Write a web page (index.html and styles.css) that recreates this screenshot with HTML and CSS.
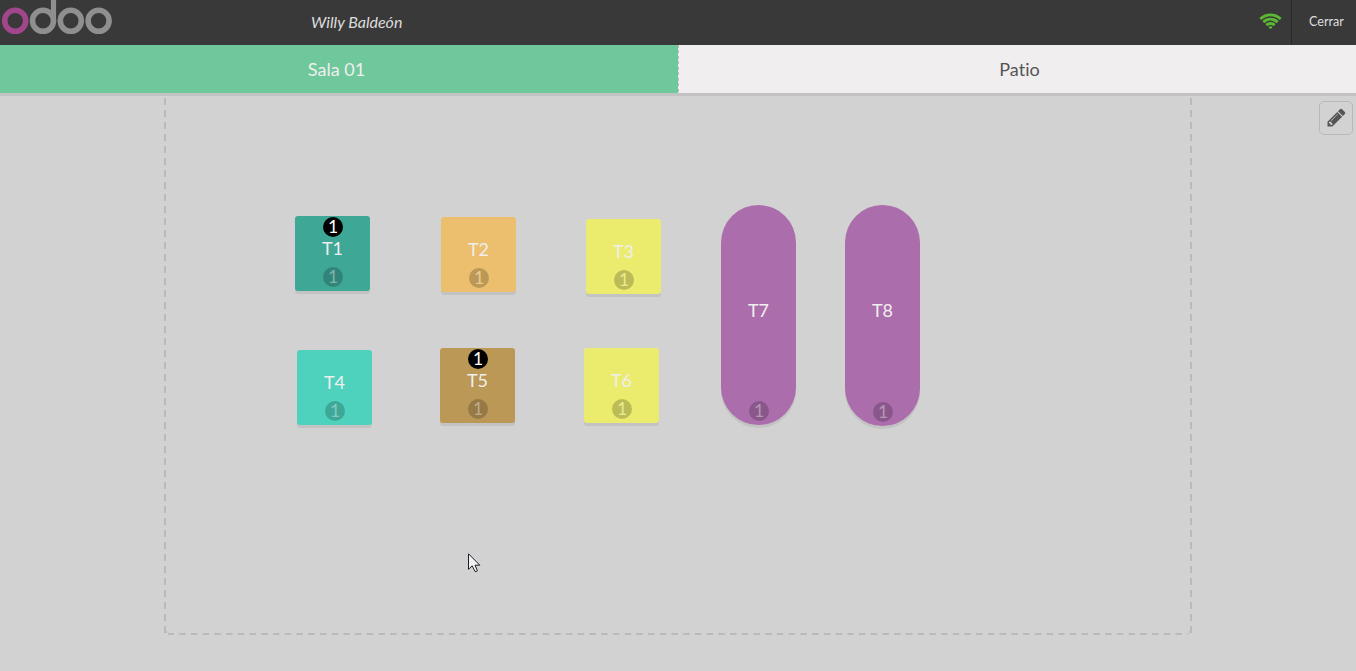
FILE: index.html
```html
<!DOCTYPE html>
<html lang="es">
<head>
<meta charset="utf-8">
<title>Odoo POS</title>
<link rel="stylesheet" href="styles.css">
</head>
<body>
<header class="topbar">
  <svg class="logo" width="116" height="45" viewBox="0 0 116 45" fill="none" stroke="#8f8f8f" stroke-width="5.6">
    <circle cx="15.2" cy="20.8" r="10.5" stroke="#a2468b"/>
    <circle cx="43" cy="20.8" r="10.5"/>
    <path d="M53.5 21V0" stroke-width="5.2"/>
    <circle cx="70.8" cy="20.8" r="10.5"/>
    <circle cx="98.6" cy="20.8" r="10.5"/>
  </svg>
  <span class="username">Willy Baldeón</span>
  <div class="status">
    <svg class="wifi" width="23" height="18" viewBox="0 0 2048 1603" fill="#5cb832"><path d="M1024 1523q-20 0 -93 -73.5t-73 -93.5q0 -32 62.500 -54t103.500 -22t103.500 22t62.500 54q0 20 -73 93.500t-93 73.500zM1294 1253q-2 0 -40 -25t-101.500 -50t-128.500 -25t-128.500 25t-101 50t-40.500 25q-18 0 -93.500 -75t-75.500 -93q0 -13 10 -23q78 -77 196 -121t233 -44t233 44t196 121q10 10 10 23q0 18 -75.500 93t-93.500 75zM1567 980q-11 0 -23 -8q-136 -105 -252 -154.500t-268 -49.500q-85 0 -170.500 22t-149 53t-113.500 62t-79 53t-31 22q-17 0 -92 -75t-75 -93q0 -12 10 -22q132 -132 320 -205t380 -73t380 73t320 205q10 10 10 22q0 18 -75 93t-92 75zM1838 709q-11 0 -22 -9q-179 -157 -371.500 -236.500t-420.500 -79.500t-420.500 79.500t-371.500 236.500q-11 9 -22 9q-17 0 -92.500 -75t-75.500 -93q0 -13 10 -23q187 -186 445 -288t527 -102t527 102t445 288q10 10 10 23q0 18 -75.500 93t-92.500 75z"/></svg>
  </div>
  <div class="close">Cerrar</div>
</header>
<nav class="floors">
  <div class="floor-tab active">Sala 01</div>
  <div class="floor-tab">Patio</div>
</nav>
<main class="floor">
  <div class="map">
    <svg class="outline" width="1028" height="542" viewBox="0 0 1028 542" fill="none" stroke="#bababa" stroke-width="2">
      <path d="M1 5V533" stroke-dasharray="7 5"/>
      <path d="M1027 5V533" stroke-dasharray="7 5"/>
      <path d="M4 541H1024" stroke-dasharray="6.500 5.220" stroke-dashoffset="0.500"/>
      <path d="M1 533V539H3M1027 533V539H1025"/>
    </svg>
    <div class="table t1"><b class="orders">1</b><span class="label">T1</span><i class="seats">1</i></div>
    <div class="table t2"><span class="label">T2</span><i class="seats">1</i></div>
    <div class="table t3"><span class="label">T3</span><i class="seats">1</i></div>
    <div class="table t4"><span class="label">T4</span><i class="seats">1</i></div>
    <div class="table t5"><b class="orders">1</b><span class="label">T5</span><i class="seats">1</i></div>
    <div class="table t6"><span class="label">T6</span><i class="seats">1</i></div>
    <div class="table tall t7"><span class="label">T7</span><i class="seats">1</i></div>
    <div class="table tall t8"><span class="label">T8</span><i class="seats">1</i></div>
  </div>
  <div class="edit">
    <svg width="21" height="21" viewBox="0 0 1792 1792" fill="#555"><path d="M491 1536l91-91-235-235-91 91v107h128v128h107zm523-928q0-22-22-22-10 0-17 7l-542 542q-7 7-7 17 0 22 22 22 10 0 17-7l542-542q7-7 7-17zm-54-192l416 416-832 832h-416v-416zm683 96q0 53-37 90l-166 166-416-416 166-165q36-38 90-38 53 0 91 38l235 234q37 39 37 91z"/></svg>
  </div>
  <svg class="cursor" width="14" height="21" viewBox="0 0 14 21" fill="#f2f2f2" stroke="#1c1c28" stroke-width="1"><path d="M.5 .8V16.300L4.200 12.800L6.900 18.200Q8 19.400 9.400 17.800L7 12.200H11.800Z"/></svg>
</main>
</body>
</html>
```

FILE: styles.css
```css
* { box-sizing: border-box; }
body {
  margin: 0;
  height: 671px;
  display: flex;
  flex-direction: column;
  overflow: hidden;
  background: #d2d2d2;
  font-family: Lato, sans-serif;
  font-variant-ligatures: none;
}
.topbar {
  height: 45px;
  flex: none;
  display: flex;
  align-items: center;
  background: #393939;
  color: #ddd;
}
.logo { flex: none; }
.username {
  margin-left: 195px;
  padding-bottom: 2px;
  font-size: 16px;
  font-style: italic;
}
.status {
  margin-left: auto;
  height: 45px;
  padding: 12px 9px 0 0;
  border-right: 1px solid #292929;
}
.wifi { display: block; }
.close {
  width: 64px;
  padding: 0 0 3px 17px;
  font-size: 12.6px;
}
.floors {
  flex: none;
  display: flex;
  height: 51px;
  border-bottom: 3px solid #c2c2c2;
  background: #f0eeee;
}
.floor-tab {
  flex: 1;
  padding-left: 4px;
  line-height: 49px;
  text-align: center;
  font-size: 18px;
  color: #555;
}
.floor-tab.active {
  flex: 0 0 679px;
  padding: 0 6px 0 0;
  color: #f0eeee;
  background:
    repeating-linear-gradient(#bdbdbd 0 3px, #f0eeee 3px 5.500px) right / 1px 100% no-repeat,
    #6ec89b;
}
.floor {
  position: relative;
  flex: 1;
  padding: 0 164px;
}
.map {
  position: relative;
  width: 1028px;
  height: 542px;
}
.outline {
  position: absolute;
  left: 0;
  top: -3px;
}
.table {
  position: absolute;
  width: 75px;
  height: 75px;
  display: flex;
  align-items: center;
  justify-content: center;
  padding-bottom: 11px;
  border-radius: 3px;
  box-shadow: 0 3px rgba(0, 0, 0, 0.07);
  font-size: 18px;
  color: #f0eeee;
}
.table.tall { height: 220px; padding-bottom: 10px; border-radius: 38px; }
.label { line-height: 20px; }
.orders, .seats {
  position: absolute;
  left: 28px;
  width: 20px;
  height: 20px;
  border-radius: 50%;
  line-height: 20px;
  text-align: center;
  font-size: 17.5px;
  font-weight: 400;
  font-style: normal;
}
.orders { top: 1px; background: #000; color: #fff; }
.seats {
  bottom: 4px;
  background: rgba(0, 0, 0, 0.2);
  color: rgba(255, 255, 255, 0.4);
}
.t1 { left: 131px; top: 120px; background: #3ea796; }
.t2 { left: 277px; top: 121px; background: #ebbf6d; }
.t3 { left: 422px; top: 123px; background: #ebec6d; }
.t4 { left: 133px; top: 254px; background: #4ed2be; }
.t5 { left: 276px; top: 252px; background: #bc9857; }
.t6 { left: 420px; top: 252px; background: #ebec6d; }
.t2 .seats { color: #ebcb91; }
.t3 .seats, .t6 .seats { color: #ebec8f; }
.t7 { left: 557px; top: 109px; background: #ac6dad; }
.table.t8 { left: 681px; top: 109px; height: 221px; padding-bottom: 11px; background: #ac6dad; }
.edit {
  position: absolute;
  right: 3px;
  top: 5px;
  width: 34px;
  height: 34px;
  display: flex;
  align-items: center;
  justify-content: center;
  padding-bottom: 1px;
  border: 1px solid #b8b8b8;
  border-radius: 5px;
}
.cursor { position: absolute; left: 468px; top: 457px; }
```
